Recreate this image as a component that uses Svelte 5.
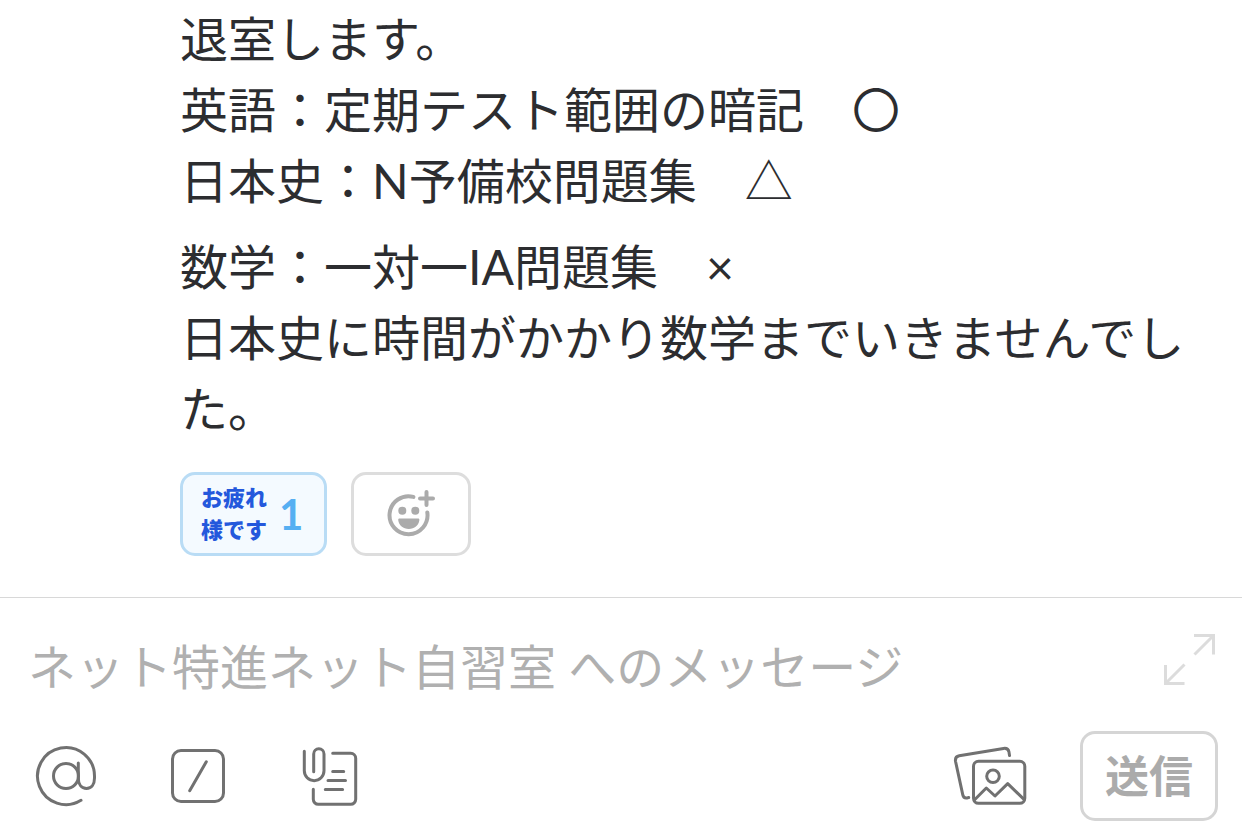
<script>
  const paragraphs = [
    [
      "退室します。",
      "英語：定期テスト範囲の暗記　〇",
      "日本史：N予備校問題集　△",
    ],
    [
      "数学：一対一IA問題集　×",
      "日本史に時間がかかり数学までいきませんでした。",
    ],
  ];

  let count = 1;
  let reacted = true;
  let message = "";

  function toggleReaction() {
    reacted = !reacted;
    count += reacted ? 1 : -1;
  }

  function sendMessage() {
    message = "";
  }
</script>

<main>
  <article>
    {#each paragraphs as lines}
      <p>
        {#each lines as line, i}
          {#if i > 0}<br />{/if}{line}
        {/each}
      </p>
    {/each}

    <div class="reactions">
      <button class="reaction" class:reacted on:click={toggleReaction}>
        <span class="emoji">お疲れ<br />様です</span>
        <span class="count">{count}</span>
      </button>
      <button class="reaction add" aria-label="リアクションを追加">
        <svg width="48" height="48" viewBox="0 0 48 48">
          <g fill="none" stroke="#ababab" stroke-width="4" stroke-linecap="round">
            <path d="M40.3 22.4A19 19 0 1 1 26.4 6.9" />
            <path d="M39.5 2v13M33 8.5h13" />
          </g>
          <g fill="#ababab">
            <circle cx="15.3" cy="20.7" r="4" />
            <circle cx="28.3" cy="20.7" r="4" />
            <path d="M12.5 28.5H31c1 0 1.5.6 1.4 1.5-.7 5.500-4.900 9-10.600 9s-9.900-3.500-10.600-9c-.1-.9.4-1.500 1.300-1.500z" />
          </g>
        </svg>
      </button>
    </div>
  </article>

  <form on:submit|preventDefault={sendMessage}>
    <div class="field">
      <input
        type="text"
        aria-label="メッセージ"
        placeholder="ネット特進ネット自習室 へのメッセージ"
        bind:value={message}
      />
      <button type="button" class="expand" aria-label="拡大">
        <svg width="56" height="56" viewBox="0 0 56 56">
          <path d="M32 3.5h19.5v19M51.5 3.5l-19 19M3.5 33v18.5h19M3.5 51.5l19-19" />
        </svg>
      </button>
    </div>

    <div class="toolbar">
      <button type="button" class="tool" aria-label="メンション">
        <svg width="64" height="64" viewBox="0 0 64 64">
          <circle cx="32" cy="32" r="12.5" />
          <path d="M47 56.3A28.5 28.5 0 1 1 60.5 32v2c0 6.2-3 10.4-8 10.4s-8.2-4.2-8.2-10.4V19" />
        </svg>
      </button>
      <button type="button" class="tool" aria-label="コマンド">
        <svg width="64" height="64" viewBox="0 0 64 64">
          <rect x="6.5" y="6.5" width="51" height="51" rx="8.5" />
          <path d="M23.7 46.7l16.6-29" />
        </svg>
      </button>
      <button type="button" class="tool" aria-label="ファイル">
        <svg width="64" height="64" viewBox="0 0 64 64">
          <path d="M6.3 7.3v19.5a9.85 9.85 0 0 0 19.7 0V9.900a5.15 5.15 0 0 0-10.3 0v17.8" />
          <path d="M34.7 9.300h18a5 5 0 0 1 5 5v41a5 5 0 0 1-5 5H20.300a5 5 0 0 1-5-5v-10" />
          <path d="M34.7 27.5h11M30 36.5h17.5M27.3 45.5h17.300" />
        </svg>
      </button>
      <span class="spacer"></span>
      <button type="button" class="tool" aria-label="写真">
        <svg width="76" height="64" viewBox="0 0 76 64">
          <path d="M16.7 53.6l-1.7.3c-2.2.3-3.700-.6-4.200-3L3.500 17.200c-.4-2.800.9-4.900 3.700-5.400l44.300-7.400c3-.4 5 .9 5.500 3.700l.5 3.400" />
          <rect x="21.500" y="17.300" width="51.300" height="42" rx="5" />
          <circle cx="41" cy="32.300" r="6.300" />
          <path d="M22.600 55.800L34.300 44l8.700 8 12.700-12.300L72 55.300" />
        </svg>
      </button>
      <button class="send">送信</button>
    </div>
  </form>
</main>

<style>
  :global(body) {
    background-color: #fff;
  }

  main {
    font-family: Lato, "Noto Sans CJK JP", sans-serif;
    color: #2c2d30;
  }

  article {
    padding: 3px 24px 41px 180px;
  }

  p {
    margin: 0 0 15px;
    font-size: 48px;
    line-height: 71px;
  }

  button {
    box-sizing: border-box;
    margin: 0;
    padding: 0;
    border: none;
    background: none;
    font-family: inherit;
    cursor: pointer;
  }

  svg {
    display: block;
  }

  .reactions {
    display: flex;
    gap: 24px;
    margin-top: 28px;
  }

  .reaction {
    display: flex;
    align-items: center;
    justify-content: center;
    gap: 12px;
    height: 84px;
    padding: 0 21px 0 18px;
    border: 3px solid #ddd;
    border-radius: 15px;
    color: #ababab;
  }

  .reaction.reacted {
    border-color: #b9dcf5;
    background-color: #f4faff;
    color: #56aff2;
  }

  .reaction.add {
    width: 120px;
    padding: 0;
  }

  .emoji {
    color: #2458dc;
    font-size: 22px;
    font-weight: 900;
    line-height: 32px;
  }

  .count {
    font-size: 42px;
    font-weight: 700;
    line-height: 48px;
  }

  form {
    padding: 34px 24px 16px;
    border-top: 1px solid #d8d8d8;
  }

  .field {
    display: flex;
    align-items: flex-start;
    margin-bottom: 30px;
  }

  input {
    flex: 1;
    min-width: 0;
    height: 69px;
    box-sizing: border-box;
    padding: 0 4px;
    border: none;
    outline: none;
    background: none;
    color: inherit;
    font-family: inherit;
    font-size: 48px;
  }

  input::placeholder {
    color: #b0b0b0;
    opacity: 1;
  }

  .expand svg {
    fill: none;
    stroke: #dcdcdc;
    stroke-width: 3;
  }

  .toolbar {
    display: flex;
    align-items: center;
    gap: 48px;
  }

  .tool {
    display: flex;
    align-items: center;
    justify-content: center;
    width: 84px;
    height: 84px;
  }

  .tool svg {
    fill: none;
    stroke: #717171;
    stroke-width: 3;
    stroke-linecap: round;
    stroke-linejoin: round;
  }

  .spacer {
    flex: 1;
  }

  .send {
    width: 138px;
    height: 90px;
    padding-bottom: 4px;
    border: 3px solid #d5d5d5;
    border-radius: 15px;
    color: #ababab;
    font-size: 44px;
    font-weight: 700;
  }
</style>
